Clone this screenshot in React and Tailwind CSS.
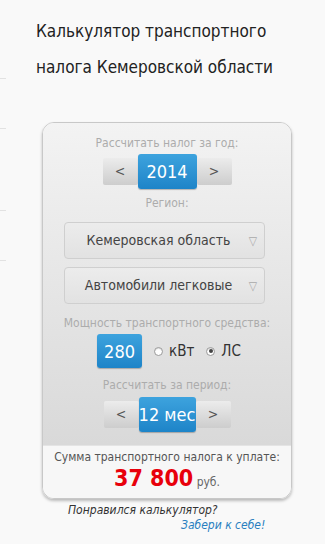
import React, { useState } from 'react';

const font = { fontFamily: '"DejaVu Sans Condensed", "DejaVu Sans", Verdana, sans-serif' };

const ArrowButton = ({ children, onClick }) => (
  <button
    onClick={onClick}
    className="h-[27px] w-[35px] flex items-center justify-center bg-gradient-to-b from-[#ececec] to-[#cdcdcd] text-[#555] text-[14px] rounded-[2px]"
  >
    {children}
  </button>
);

const BlueBox = ({ children, className = '' }) => (
  <div
    className={`flex items-center justify-center whitespace-nowrap bg-gradient-to-b from-[#3da3de] to-[#1d84c8] text-white text-[18px] rounded-[3px] shadow-[0_1px_1px_rgba(0,0,0,0.25)] ${className}`}
  >
    {children}
  </div>
);

const Select = ({ value }) => (
  <div className="ml-[21px] mr-[26px] h-[37px] relative flex items-center justify-center rounded-[4px] border border-[#cfcfcf] bg-gradient-to-b from-[#ececec] to-[#e2e2e2] text-[14px] text-[#444]">
    <span className="pr-[12px] whitespace-nowrap">{value}</span>
    <span className="absolute right-[7px] top-[9px] text-[12px] text-[#aaa]">▽</span>
  </div>
);

const Label = ({ children, className = '' }) => (
  <div className={`text-center text-[12px] leading-[16px] text-[#acacac] whitespace-nowrap ${className}`}>{children}</div>
);

const Radio = ({ checked, label }) => (
  <label className="flex items-center gap-[6px] text-[15px] text-[#333]">
    <span className="w-[9px] h-[9px] rounded-full border border-[#999] bg-white flex items-center justify-center shadow-[inset_0_1px_1px_rgba(0,0,0,0.15)]">
      {checked && <span className="w-[4px] h-[4px] rounded-full bg-[#444]" />}
    </span>
    {label}
  </label>
);

export default function App() {
  const [year, setYear] = useState(2014);
  const [months, setMonths] = useState(12);

  return (
    <div className="w-[325px] h-[544px] bg-[#f9f9f9] relative overflow-hidden" style={font}>
      {/* боковые риски */}
      <div className="absolute left-0 top-[78px] w-[6px] h-px bg-[#e2e2e2]" />
      <div className="absolute left-0 top-[128px] w-[6px] h-px bg-[#e2e2e2]" />
      <div className="absolute left-0 top-[210px] w-[6px] h-px bg-[#e2e2e2]" />
      <div className="absolute left-0 top-[260px] w-[6px] h-px bg-[#e2e2e2]" />

      <h1 className="pl-[36px] pt-[13px] text-[17px] leading-[36px] text-[#222] font-normal whitespace-nowrap">
        Калькулятор транспортного
        <br />
        налога Кемеровской области
      </h1>

      <div className="ml-[42px] mt-[37px] w-[250px] rounded-[12px] border border-[#c8c8c8] shadow-[0_2px_3px_rgba(0,0,0,0.25)] overflow-hidden">
        <div className="bg-gradient-to-b from-[#f3f3f3] to-[#d9d9d9] pt-[12px] pb-[13px]">
          <Label>Рассчитать налог за год:</Label>
          <div className="mt-[3px] flex items-center justify-center">
            <ArrowButton onClick={() => setYear(year - 1)}>&lt;</ArrowButton>
            <BlueBox className="w-[59px] h-[35px]">{year}</BlueBox>
            <ArrowButton onClick={() => setYear(year + 1)}>&gt;</ArrowButton>
          </div>

          <Label className="mt-[6px]">Регион:</Label>
          <div className="mt-[11px]">
            <Select value="Кемеровская область" />
          </div>
          <div className="mt-[8px]">
            <Select value="Автомобили легковые" />
          </div>

          <Label className="mt-[11px]">Мощность транспортного средства:</Label>
          <div className="mt-[3px] flex items-center justify-center gap-[12px] pl-[4px]">
            <BlueBox className="w-[45px] h-[34px]">280</BlueBox>
            <Radio label="кВт" />
            <Radio checked label="ЛС" />
          </div>

          <Label className="mt-[9px]">Рассчитать за период:</Label>
          <div className="mt-[4px] flex items-center justify-center">
            <ArrowButton onClick={() => setMonths(Math.max(1, months - 1))}>&lt;</ArrowButton>
            <BlueBox className="w-[57px] h-[35px]">{months} мес</BlueBox>
            <ArrowButton onClick={() => setMonths(Math.min(12, months + 1))}>&gt;</ArrowButton>
          </div>
        </div>

        <div className="bg-[#f7f7f7] border-t border-[#e4e4e4] pt-[3px] pb-[2px] text-center">
          <div className="text-[12px] leading-[16px] text-[#555] whitespace-nowrap">Сумма транспортного налога к уплате:</div>
          <div className="leading-[27px]">
            <span className="text-[23px] font-bold text-[#e8000b]">37 800</span>
            <span className="text-[12px] text-[#666]"> руб.</span>
          </div>
        </div>
      </div>

      <div className="mt-[4px] pl-[68px] text-[12px] italic leading-[15px] text-[#333]">Понравился калькулятор?</div>
      <div className="pl-[181px] text-[12px] italic leading-[15px] text-[#2a7fc0]">Забери к себе!</div>
    </div>
  );
}
